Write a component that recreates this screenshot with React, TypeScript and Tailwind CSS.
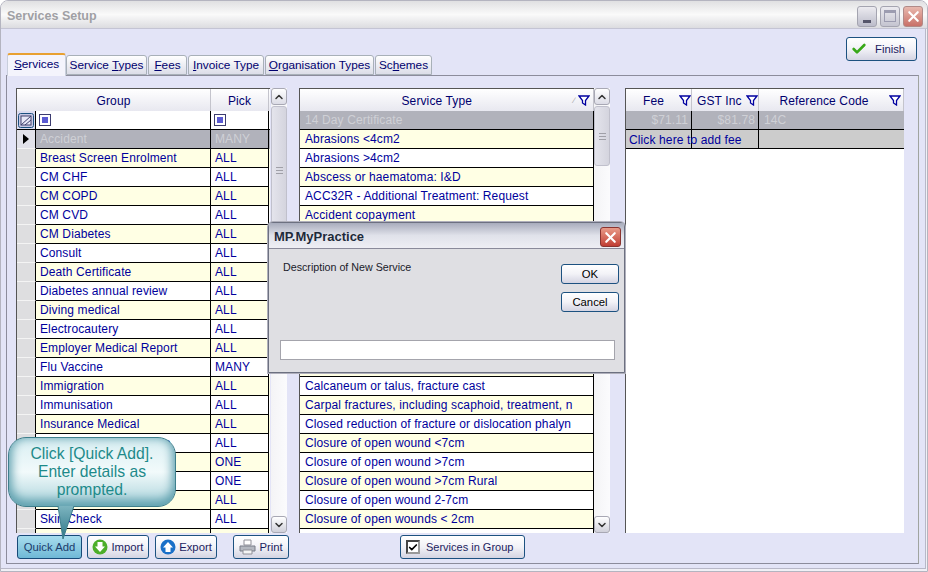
import { Check, ChevronDown, ChevronUp, X } from "lucide-react";
import type { ReactNode } from "react";

const groups = [
  ["Breast Screen Enrolment", "ALL"],
  ["CM CHF", "ALL"],
  ["CM COPD", "ALL"],
  ["CM CVD", "ALL"],
  ["CM Diabetes", "ALL"],
  ["Consult", "ALL"],
  ["Death Certificate", "ALL"],
  ["Diabetes annual review", "ALL"],
  ["Diving medical", "ALL"],
  ["Electrocautery", "ALL"],
  ["Employer Medical Report", "ALL"],
  ["Flu Vaccine", "MANY"],
  ["Immigration", "ALL"],
  ["Immunisation", "ALL"],
  ["Insurance Medical", "ALL"],
  ["Insurance Medical Base", "ALL"],
  ["", "ONE"],
  ["", "ONE"],
  ["", "ALL"],
  ["Skin Check", "ALL"],
  ["", ""],
];

const serviceTypes = [
  "Abrasions <4cm2",
  "Abrasions >4cm2",
  "Abscess or haematoma: I&D",
  "ACC32R - Additional Treatment: Request",
  "Accident copayment",
  "",
  "",
  "",
  "",
  "",
  "",
  "",
  "",
  "Calcaneum or talus, fracture cast",
  "Carpal fractures, including scaphoid, treatment, n",
  "Closed reduction of fracture or dislocation phalyn",
  "Closure of open wound <7cm",
  "Closure of open wound >7cm",
  "Closure of open wound >7cm Rural",
  "Closure of open wound 2-7cm",
  "Closure of open wounds < 2cm",
  "",
];

function Funnel() {
  return (
    <svg width="12" height="11" viewBox="0 0 12 11" className="shrink-0">
      <path d="M1 1h10L7.5 5.5V10L4.5 8V5.5Z" fill="#fff" stroke="#0000a0" strokeWidth="1.3" />
    </svg>
  );
}

function Btn({ children, className, active }: { children: ReactNode; className: string; active?: boolean }) {
  return (
    <div
      className={`flex items-center whitespace-nowrap rounded-[3px] border bg-gradient-to-b tracking-normal ${
        active
          ? "border-[#174a78] from-[#a8dcee] via-[#8ccbe2] to-[#6fb8d6] text-[#1c3c6c]"
          : "border-[#1c5180] from-white via-[#f2f2f7] to-[#d4d4e2]"
      } ${className}`}
    >
      {children}
    </div>
  );
}

function ScrollBar({ thumb }: { thumb: string }) {
  return (
    <div className="relative flex w-[16px] flex-col justify-between bg-gradient-to-r from-[#f4f4f6] to-[#fbfbfd]">
      <div className="flex h-[17px] items-center justify-center rounded-[3px] border border-[#a8a8b4] bg-gradient-to-b from-white to-[#dcdce6]">
        <ChevronUp size={12} strokeWidth={3} className="text-[#333]" />
      </div>
      <div
        className={`absolute left-0 top-[18px] flex w-[16px] items-center justify-center rounded-[3px] border border-[#c0c0cc] bg-gradient-to-r from-[#e4e4ec] to-[#d4d4de] ${thumb}`}
      >
        <div className="flex h-[7px] w-[7px] items-center border-y border-[#a0a0a8]">
          <div className="h-[1px] w-full bg-[#a0a0a8]" />
        </div>
      </div>
      <div className="flex h-[17px] items-center justify-center rounded-[3px] border border-[#a8a8b4] bg-gradient-to-b from-white to-[#d0d0da]">
        <ChevronDown size={12} strokeWidth={3} className="text-[#333]" />
      </div>
    </div>
  );
}

function FilterCheck() {
  return (
    <div className="flex h-[12px] w-[12px] items-center justify-center border border-[#3c3c70] bg-white">
      <div className="h-[6px] w-[6px] bg-[#5a5ad2]" />
    </div>
  );
}

function Header({ className, children }: { className: string; children: ReactNode }) {
  return <div className={`flex items-center border-r border-[#c4c4cc] pt-[1px] ${className}`}>{children}</div>;
}

export default function App() {
  return (
    <div className="relative flex h-[572px] w-[928px] flex-col overflow-hidden rounded-t-[8px] border border-[#b4b4c0] bg-[#f0f0f6] font-['Liberation_Sans',sans-serif] text-[12px] tracking-[0.12px]">
      {/* title bar */}
      <div className="flex h-[28px] shrink-0 items-center justify-between border-b border-[#c4c4d4] bg-gradient-to-b from-[#e0e0e2] via-[#fafafa] to-[#dcdce0] pl-[6px] pr-[4px] pt-[3px]">
        <span className="text-[12.5px] font-bold tracking-normal text-[#a0a0a4]">Services Setup</span>
        <div className="flex gap-[3px]">
          <div className="flex h-[21px] w-[20px] items-end justify-center rounded-[3px] border border-[#a4a4b0] bg-gradient-to-b from-[#ecebf0] to-[#bcbcca] pb-[3px]">
            <div className="h-[3px] w-[8px] bg-[#55556a]" />
          </div>
          <div className="flex h-[21px] w-[20px] items-center justify-center rounded-[3px] border border-[#a4a4b0] bg-gradient-to-b from-[#ecebf0] to-[#c4c4d0]">
            <div className="h-[12px] w-[12px] border border-t-[3px] border-[#9c9cb0]" />
          </div>
          <div className="flex h-[21px] w-[20px] items-center justify-center rounded-[3px] border border-[#b08a88] bg-gradient-to-b from-[#e8b8ae] to-[#c87068]">
            <X size={17} strokeWidth={3} className="text-white" />
          </div>
        </div>
      </div>

      <div className="mb-[2px] mr-[1px] flex flex-1 flex-col border-b border-r border-[#b8b8c8] bg-[#e3e4f7] pl-[5px] pr-[6px]">
        {/* tabs and finish */}
        <div className="relative flex h-[46px] shrink-0 items-end justify-between">
          <div className="flex items-end gap-[1px] whitespace-nowrap pl-[1px] text-[11.8px] tracking-normal text-[#00006e]">
            <div className="z-10 -mb-[1px] -mr-[1px] flex h-[23px] w-[59px] items-center justify-center rounded-t-[3px] border-x border-t-2 border-[#c8cedc] border-t-[#e8a030] bg-[#f4f4fc] pb-[2px]">
              <span><u>S</u>ervices</span>
            </div>
            <div className="flex h-[20px] w-[81px] items-center justify-center rounded-t-[3px] border border-[#a8b0b8] bg-gradient-to-b from-white to-[#dcdde8] pt-[1px]">
              <span>Service <u>T</u>ypes</span>
            </div>
            <div className="flex h-[20px] w-[39px] items-center justify-center rounded-t-[3px] border border-[#a8b0b8] bg-gradient-to-b from-white to-[#dcdde8] pt-[1px]">
              <span><u>F</u>ees</span>
            </div>
            <div className="flex h-[20px] w-[76px] items-center justify-center rounded-t-[3px] border border-[#a8b0b8] bg-gradient-to-b from-white to-[#dcdde8] pt-[1px]">
              <span><u>I</u>nvoice Type</span>
            </div>
            <div className="flex h-[20px] w-[109px] items-center justify-center rounded-t-[3px] border border-[#a8b0b8] bg-gradient-to-b from-white to-[#dcdde8] pt-[1px]">
              <span><u>O</u>rganisation Types</span>
            </div>
            <div className="flex h-[20px] w-[57px] items-center justify-center rounded-t-[3px] border border-[#a8b0b8] bg-gradient-to-b from-white to-[#dcdde8] pt-[1px]">
              <span>Sc<u>h</u>emes</span>
            </div>
          </div>
          <Btn className="mb-[14px] mr-[2px] h-[24px] w-[71px] gap-[8px] pl-[4px] text-[11.3px] text-[#1c1c60]">
            <Check size={16} strokeWidth={4} className="text-[#38a818]" />
            <span>Finish</span>
          </Btn>
        </div>

        {/* tab panel */}
        <div className="flex h-[489px] flex-col border border-[#8c8c9c] border-r-[#a0a4a0] pl-[9px] pt-[12px]">
          <div className="flex h-[445px] shrink-0">
            {/* group grid */}
            <div className="flex w-[254px] shrink-0 flex-col overflow-hidden border-l border-t border-[#555] bg-white">
              <div className="flex h-[22px] shrink-0 bg-gradient-to-b from-white to-[#e8e8f0] text-[#00006e]">
                <Header className="w-[194px] justify-center">Group</Header>
                <Header className="w-[58px] justify-center">Pick</Header>
              </div>
              <div className="flex h-[19px] shrink-0 border-b border-black">
                <div className="flex w-[19px] items-center justify-center border-r border-black bg-[#dcdcf0]">
                  <svg width="16" height="15" viewBox="0 0 16 15">
                    <rect x="0.5" y="0.5" width="15" height="14" rx="2" fill="#c8c8e4" stroke="#1c5180" />
                    <rect x="3" y="3" width="10" height="9" fill="#e8e8f8" stroke="#40406c" />
                    <path d="M3 12 13 3" stroke="#40406c" />
                    <path d="M7 12 13 7" stroke="#40406c" />
                  </svg>
                </div>
                <div className="flex w-[175px] items-center border-r border-black pl-[3px]"><FilterCheck /></div>
                <div className="flex w-[58px] items-center border-r border-black pl-[3px]"><FilterCheck /></div>
              </div>
              <div className="flex h-[19px] shrink-0 bg-[#b1b2bb] text-[#cfd0d6]">
                <div className="flex w-[19px] items-center justify-center border-b border-r border-b-[#f4f4f4] border-r-black bg-[#e2e2ea]">
                  <div className="h-0 w-0 border-y-[5px] border-l-[6px] border-y-transparent border-l-black" />
                </div>
                <div className="flex w-[175px] items-center border-b border-r border-black pl-[4px]">Accident</div>
                <div className="flex w-[58px] items-center border-b border-r border-black pl-[4px]">MANY</div>
              </div>
              {groups.map((g, i) => (
                <div key={i} className={`flex h-[19px] shrink-0 text-[#00009c] ${i % 2 === 0 ? "bg-[#ffffe4]" : "bg-white"}`}>
                  <div className="w-[19px] border-b border-r border-b-[#f4f4f4] border-r-black bg-[#dedee0]" />
                  <div className="flex w-[175px] items-center whitespace-nowrap border-b border-r border-black pl-[4px]">{g[0]}</div>
                  <div className="flex w-[58px] items-center border-b border-r border-black pl-[4px]">{g[1]}</div>
                </div>
              ))}
            </div>
            <div className="w-[1px]" />
            <ScrollBar thumb="h-[128px]" />

            {/* service type grid */}
            <div className="ml-[12px] flex w-[295px] shrink-0 flex-col overflow-hidden border-l border-t border-[#555] bg-white">
              <div className="flex h-[22px] shrink-0 items-center border-r border-[#c4c4cc] bg-gradient-to-b from-white to-[#e8e8f0] pr-[3px] pt-[1px] text-[#00006e]">
                <span className="flex-1 text-center">Service Type</span>
                <span className="mr-[3px] text-[8px] text-[#a0a0a0]">∕</span>
                <Funnel />
              </div>
              <div className="flex h-[19px] shrink-0 items-center border-b border-r border-black bg-[#b1b2bb] pl-[5px] text-[#cfd0d6]">14 Day Certificate</div>
              {serviceTypes.map((s, i) => (
                <div key={i} className={`flex h-[19px] shrink-0 items-center whitespace-nowrap border-b border-r border-black pl-[5px] text-[#00009c] ${i % 2 === 0 ? "bg-[#ffffe4]" : "bg-white"}`}>
                  {s}
                </div>
              ))}
            </div>
            <ScrollBar thumb="h-[60px]" />

            {/* fee grid */}
            <div className="ml-[15px] flex w-[279px] shrink-0 flex-col border-l border-t border-[#555] bg-white">
              <div className="flex h-[22px] shrink-0 bg-gradient-to-b from-white to-[#e8e8f0] text-[#00006e]">
                <Header className="w-[66px] justify-between pl-[17px]">Fee<Funnel /></Header>
                <Header className="w-[67px] justify-between pl-[5px]">GST Inc<Funnel /></Header>
                <Header className="flex-1 justify-between pr-[2px]"><span className="flex-1 text-center">Reference Code</span><Funnel /></Header>
              </div>
              <div className="flex h-[19px] shrink-0 border-b border-black bg-[#b1b2bb] text-[#cfd0d6]">
                <div className="flex w-[66px] items-center justify-end border-r border-black pr-[3px]">$71.11</div>
                <div className="flex w-[67px] items-center justify-end border-r border-black pr-[3px]">$81.78</div>
                <div className="flex flex-1 items-center pl-[5px]">14C</div>
              </div>
              <div className="relative flex h-[19px] shrink-0 border-b border-black bg-[#cccccc] text-[#00009c]">
                <div className="w-[66px] border-r border-black" />
                <div className="w-[67px] border-r border-black" />
                <span className="absolute left-[3px] top-[1px]">Click here to add fee</span>
              </div>
            </div>
          </div>

          {/* toolbar */}
          <div className="mt-[2px] flex h-[24px] items-center pl-[1px] text-[11.3px] text-[#1c1c60]">
            <Btn active className="h-[24px] w-[65px] justify-center">Quick Add</Btn>
            <Btn className="ml-[5px] h-[24px] w-[62px] justify-center gap-[3px]">
              <svg width="16" height="16" viewBox="0 0 16 16">
                <circle cx="8" cy="8" r="7.5" fill="#4cae2a" />
                <path d="M5.5 3h5v4.5h2.5L8 13 3 7.5h2.5Z" fill="#fff" />
              </svg>
              Import
            </Btn>
            <Btn className="ml-[6px] h-[24px] w-[62px] justify-center gap-[3px]">
              <svg width="16" height="16" viewBox="0 0 16 16">
                <circle cx="8" cy="8" r="7.5" fill="#1a70c8" />
                <path d="M5.5 13h5V8.5h2.5L8 3 3 8.5h2.5Z" fill="#fff" />
              </svg>
              Export
            </Btn>
            <Btn className="ml-[16px] h-[24px] w-[56px] justify-center gap-[3px]">
              <svg width="17" height="16" viewBox="0 0 17 16">
                <path d="M5 1h7v5H5Z" fill="#fff" stroke="#909098" />
                <path d="M1 7h15v5H1Z" fill="#b4b8c0" stroke="#787c88" />
                <path d="M4 11h9v4H4Z" fill="#f4f4f4" stroke="#909098" />
              </svg>
              Print
            </Btn>
            <Btn className="ml-[111px] h-[24px] w-[125px] gap-[6px] pl-[5px] text-[11px]">
              <div className="flex h-[14px] w-[14px] items-center justify-center border-2 border-[#444] border-b-[#999] border-r-[#999] bg-white">
                <Check size={11} strokeWidth={4} className="text-black" />
              </div>
              Services in Group
            </Btn>
          </div>
        </div>
      </div>

      {/* modal */}
      <div className="absolute left-[267px] top-[221px] flex h-[151px] w-[357px] flex-col rounded-t-[5px] border border-[#6c7080] bg-[#dfdfe3] shadow-[0_0_0_1px_#b0b0bc]">
        <div className="flex h-[26px] shrink-0 items-center justify-between border-b border-[#8a8a9a] bg-gradient-to-b from-[#a8acbc] via-[#e0e2ea] to-[#eeeef4] pl-[5px] pr-[3px] pt-[3px]">
          <span className="text-[13px] font-bold tracking-normal text-[#1e2a3a]">MP.MyPractice</span>
          <div className="flex h-[20px] w-[21px] items-center justify-center rounded-[3px] border border-[#8a3430] bg-gradient-to-b from-[#e89a88] to-[#c03c34]">
            <X size={17} strokeWidth={3} className="text-white" />
          </div>
        </div>
        <div className="flex flex-1 flex-col justify-between pb-[12px] pl-[11px] pr-[5px] pt-[10px]">
          <div className="flex justify-between">
            <span className="pl-[3px] text-[10.7px] tracking-normal text-[#1a1a2a]">Description of New Service</span>
            <div className="flex flex-col gap-[8px] pt-[5px] text-[11.3px] text-black">
              <Btn className="h-[20px] w-[58px] justify-center">OK</Btn>
              <Btn className="h-[20px] w-[58px] justify-center">Cancel</Btn>
            </div>
          </div>
          <div className="h-[20px] w-[335px] border border-[#a4a4ac] bg-white" />
        </div>
      </div>

      {/* callout */}
      <div className="absolute left-[7px] top-[436px] flex h-[70px] w-[168px] flex-col items-center justify-center rounded-[18px] border border-[#3e7f8c] bg-gradient-to-b from-[#d8eef2] via-[#f2fafb] to-[#a8d2da] text-[15.7px] leading-[18px] tracking-normal text-[#1d8a8a] shadow-[inset_0_-3px_10px_3px_#62a2b0]">
        <span>Click [Quick Add].</span>
        <span>Enter details as</span>
        <span>prompted.</span>
      </div>
      <svg className="absolute left-[54px] top-[503px]" width="22" height="36" viewBox="0 0 22 36">
        <defs>
          <linearGradient id="tail" x1="0" y1="0" x2="0" y2="1">
            <stop offset="0" stopColor="#7cb4bf" />
            <stop offset="1" stopColor="#2f7688" />
          </linearGradient>
        </defs>
        <path d="M3 2 8 35 19 2Z" fill="url(#tail)" />
        <path d="M3 2 8 35M8 35 19 2" fill="none" stroke="#3e7f8c" />
      </svg>
    </div>
  );
}
